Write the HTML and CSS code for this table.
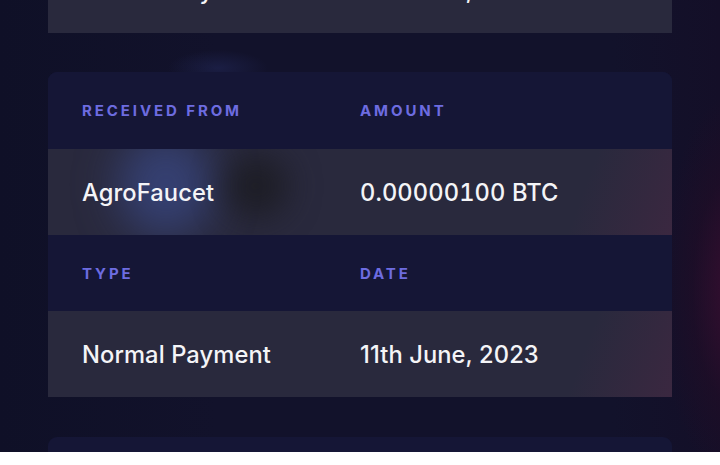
FILE: index.html
```html
<!DOCTYPE html>
<html lang="en">
<head>
<meta charset="utf-8">
<title>Transaction details</title>
<link rel="stylesheet" href="styles.css">
</head>
<body>
<div class="screen">
  <div class="stack">
    <section class="card card-partial">
      <div class="row value-row plain">
        <div class="cell value">Normal Payment</div>
        <div class="cell value">11th June, 2023</div>
      </div>
    </section>

    <section class="card">
      <div class="row label-row first">
        <div class="cell label">Received from</div>
        <div class="cell label">Amount</div>
      </div>
      <div class="row value-row">
        <span class="blob blob-blue"></span>
        <span class="blob blob-dark"></span>
        <div class="cell value">AgroFaucet</div>
        <div class="cell value num">0.00000100 BTC</div>
      </div>
      <div class="row label-row">
        <div class="cell label">Type</div>
        <div class="cell label">Date</div>
      </div>
      <div class="row value-row">
        <div class="cell value">Normal Payment</div>
        <div class="cell value">11th June, 2023</div>
      </div>
    </section>

    <section class="card card-next">
      <div class="row label-row first"></div>
    </section>
  </div>
</div>
</body>
</html>
```

FILE: styles.css
```css
* { box-sizing: border-box; }

html, body {
  margin: 0;
  background: #ffffff;
}

body {
  font-family: Inter, "Noto Sans", "Liberation Sans", sans-serif;
}

.screen {
  position: relative;
  height: 452px;
  overflow: hidden;
  background:
    radial-gradient(ellipse 80px 200px at 740px 290px, rgba(62, 14, 50, 0.9), rgba(38, 12, 38, 0.45) 60%, rgba(17, 17, 42, 0) 100%),
    radial-gradient(ellipse 50px 18px at 218px 68px, rgba(45, 55, 120, 0.32), rgba(17, 17, 42, 0)),
    linear-gradient(90deg, #0f1027 0%, #12122b 30%, #12122b 85%, #140f28 100%);
}

.stack {
  display: flex;
  flex-direction: column;
  gap: 39px;
  padding: 0 48px;
  margin-top: -53px;
}

.card {
  border-radius: 9px 9px 0 0;
  overflow: hidden;
  background: #151636;
}

.card-partial {
  border-radius: 0;
}

.card-next {
  margin-top: 1px;
}

.row {
  display: grid;
  grid-template-columns: 278px 1fr;
  align-items: center;
  padding-left: 34px;
}

.label-row {
  height: 76px;
  background: #151636;
}

.label-row.first {
  height: 77px;
}

.value-row {
  position: relative;
  overflow: hidden;
  height: 86px;
  background:
    linear-gradient(110deg, rgba(40, 40, 60, 0) 84%, rgba(80, 38, 68, 0.45) 100%),
    #29293d;
}

.value-row.plain {
  background: #29293d;
}

.cell {
  position: relative;
  z-index: 1;
}

.label {
  color: #6d6ce0;
  font-size: 15px;
  font-weight: 700;
  letter-spacing: 2.9px;
  text-transform: uppercase;
}

.value {
  color: #f4f4f7;
  font-size: 23.7px;
  font-weight: 500;
  letter-spacing: 0.1px;
}

.value.num {
  font-variant-numeric: tabular-nums;
}

.blob {
  position: absolute;
  border-radius: 50%;
  z-index: 0;
}

.blob-blue {
  left: 70px;
  top: -16px;
  width: 96px;
  height: 104px;
  filter: blur(22px);
  background: rgba(62, 80, 150, 0.6);
}

.blob-dark {
  left: 176px;
  top: 6px;
  width: 64px;
  height: 62px;
  filter: blur(16px);
  background: rgba(26, 26, 30, 0.75);
}
```
